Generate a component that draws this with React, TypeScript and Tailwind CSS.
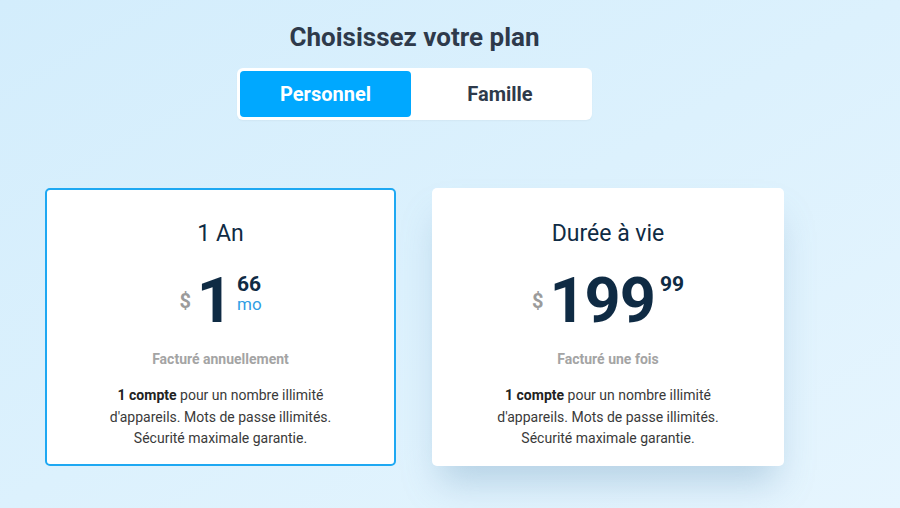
import { useState } from "react";

const PLANS = [
  { id: "year", title: "1 An", whole: "1", cents: "66", per: "mo", billed: "Facturé annuellement", selected: true },
  { id: "life", title: "Durée à vie", whole: "199", cents: "99", per: "", billed: "Facturé une fois", selected: false },
];

export default function App() {
  const [tab, setTab] = useState<"perso" | "famille">("perso");

  return (
    <div className="min-h-[508px] w-[900px] bg-gradient-to-br from-[#d3edfc] via-[#dcf1fd] to-[#e6f5fe] font-['Roboto',sans-serif] overflow-hidden">
      <div className="ml-[45px] w-[739px] pt-[20px] flex flex-col items-center">
        <h1 className="text-[26px] leading-[34px] font-bold text-[#2e3a4b]">Choisissez votre plan</h1>

        {/* Toggle */}
        <div className="mt-[14px] flex rounded-md bg-white p-[3px] shadow-[0_1px_2px_rgba(0,0,0,0.04)]">
          <button
            onClick={() => setTab("perso")}
            className={
              tab === "perso"
                ? "w-[171px] h-[46px] rounded-[4px] bg-[#00a8ff] text-white text-[20px] font-bold"
                : "w-[171px] h-[46px] rounded-[4px] text-[#2e3a4b] text-[20px] font-bold"
            }
          >
            Personnel
          </button>
          <button
            onClick={() => setTab("famille")}
            className={
              tab === "famille"
                ? "w-[178px] h-[46px] rounded-[4px] bg-[#00a8ff] text-white text-[20px] font-bold"
                : "w-[178px] h-[46px] rounded-[4px] text-[#2e3a4b] text-[20px] font-bold"
            }
          >
            Famille
          </button>
        </div>

        {/* Cards */}
        <div className="mt-[68px] flex gap-[36px] w-full">
          {PLANS.map((p) => (
            <div
              key={p.id}
              className={
                p.selected
                  ? "w-[351px] h-[278px] rounded-[5px] bg-white border-2 border-[#1ea8f2] flex flex-col items-center pt-[29px]"
                  : "w-[352px] h-[278px] rounded-[5px] bg-white flex flex-col items-center pt-[31px] shadow-[0_24px_34px_-8px_rgba(110,155,190,0.38)]"
              }
            >
              <h2 className="text-[23px] leading-[30px] text-[#0f2b44]">{p.title}</h2>
              <div className="mt-[20px] flex items-start h-[63px]">
                <span className="mt-[22px] mr-[6px] text-[20px] leading-none font-bold text-[#9b9b9b]">$</span>
                <span className="text-[63px] leading-none font-bold text-[#0f2b44] tracking-[-1px]">{p.whole}</span>
                <div className="ml-[5px] flex flex-col">
                  <span className="mt-[5px] text-[21px] leading-none font-bold text-[#0f2b44]">{p.cents}</span>
                  {p.per && <span className="mt-[1px] text-[17px] leading-none text-[#2f9de4]">{p.per}</span>}
                </div>
              </div>
              <p className="mt-[17px] text-[14px] leading-[20px] font-bold text-[#a4a4a4]">{p.billed}</p>
              <p className="mt-[16px] text-center text-[14px] leading-[21.5px] text-[#3a3a3a]">
                <span className="font-bold text-[#222]">1 compte</span> pour un nombre illimité
                <br />
                d'appareils. Mots de passe illimités.
                <br />
                Sécurité maximale garantie.
              </p>
            </div>
          ))}
        </div>
      </div>
    </div>
  );
}
